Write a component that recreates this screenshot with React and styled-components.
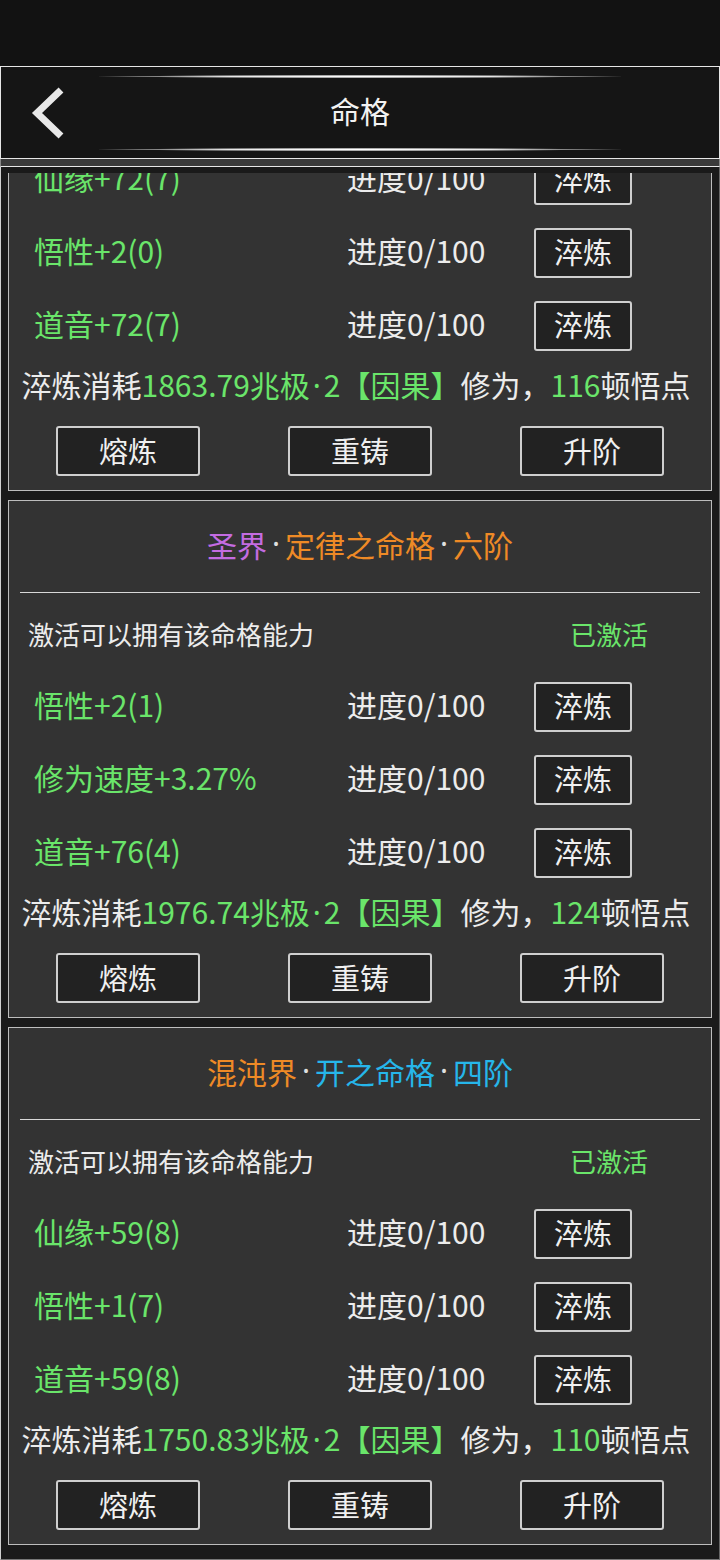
import React from 'react';
import styled, { createGlobalStyle } from 'styled-components';

const GREEN = '#6ae56a';
const ORANGE = '#ee8a26';
const BLUE = '#26b6ea';
const PURPLE = '#c46ce2';

const GlobalStyle = createGlobalStyle`
  html, body {
    margin: 0;
    padding: 0;
    background: #121212;
  }
  body {
    font-family: "Noto Sans CJK SC", "Noto Sans", sans-serif;
    color: #ececec;
  }
  #root {
    width: 720px;
  }
`;

const cards = [
  {
    title: [
      { text: '仙界', color: PURPLE },
      { text: '天道之命格', color: ORANGE },
      { text: '五阶', color: ORANGE },
    ],
    rows: ['仙缘+72(7)', '悟性+2(0)', '道音+72(7)'],
    cost: '1863.79',
    points: '116',
  },
  {
    title: [
      { text: '圣界', color: PURPLE },
      { text: '定律之命格', color: ORANGE },
      { text: '六阶', color: ORANGE },
    ],
    rows: ['悟性+2(1)', '修为速度+3.27%', '道音+76(4)'],
    cost: '1976.74',
    points: '124',
  },
  {
    title: [
      { text: '混沌界', color: ORANGE },
      { text: '开之命格', color: BLUE },
      { text: '四阶', color: BLUE },
    ],
    rows: ['仙缘+59(8)', '悟性+1(7)', '道音+59(8)'],
    cost: '1750.83',
    points: '110',
  },
];

const Page = styled.div`
  display: flex;
  flex-direction: column;
  height: 1560px;
  background: #121212;
  overflow: hidden;
`;

const StatusBar = styled.div`
  height: 66px;
  flex-shrink: 0;
`;

const Header = styled.header`
  box-sizing: border-box;
  height: 93px;
  flex-shrink: 0;
  display: flex;
  flex-direction: column;
  padding: 8px 0 7px;
  background: #151515;
  border: 1px solid #e6e6e6;
`;

const Glow = styled.div`
  height: 3px;
  margin: 0 98px;
  background: radial-gradient(ellipse at center, #ffffff 0%, #e8e8e8 35%, rgba(200, 200, 200, 0.5) 60%, transparent 72%);
`;

const TitleRow = styled.div`
  flex: 1;
  display: grid;
  grid-template-columns: 1fr auto 1fr;
  align-items: center;
`;

const BackButton = styled.div`
  display: flex;
  align-items: center;
  padding-left: 28px;
`;

const PageTitle = styled.h1`
  margin: 0 0 6px;
  font-size: 30px;
  font-weight: 400;
  color: #f2f2f2;
  line-height: 1;
`;

const Band = styled.div`
  height: 7px;
  flex-shrink: 0;
  background: #3a3a3a;
  border-bottom: 1px solid #e6e6e6;
  border-left: 1px solid #888;
  border-right: 1px solid #888;
`;

const Viewport = styled.main`
  flex: 1;
  min-height: 0;
  display: flex;
  flex-direction: column;
  padding: 6px 7px 13px;
  background: #1a1a1a;
  border-left: 1px solid #d0d0d0;
  border-right: 1px solid #666;
  border-bottom: 1px solid #777;
`;

const Clip = styled.div`
  flex: 1;
  min-height: 0;
  overflow: hidden;
`;

const List = styled.div`
  display: flex;
  flex-direction: column;
  gap: 9px;
  margin-top: -200px;
`;

const Card = styled.section`
  box-sizing: border-box;
  height: 518px;
  display: flex;
  flex-direction: column;
  background: #333333;
  border: 1px solid #bdbdbd;
`;

const CardTitle = styled.div`
  box-sizing: border-box;
  height: 91px;
  padding-bottom: 6px;
  display: flex;
  align-items: center;
  justify-content: center;
  font-size: 30px;
  line-height: 1;
`;

const Part = styled.span`
  color: ${({ $color }) => $color};
`;

const Dot = styled.span`
  font-family: "Noto Sans", sans-serif;
  color: #e0e0e0;
  margin: 0 5px;
`;

const InlineDot = styled.span`
  font-family: "Noto Sans", sans-serif;
  margin: 0 3px;
`;

const Divider = styled.div`
  height: 1px;
  margin: 0 11px;
  background: #d8d8d8;
`;

const ActiveRow = styled.div`
  box-sizing: border-box;
  height: 77px;
  padding: 4px 63px 0 19px;
  display: flex;
  align-items: center;
  justify-content: space-between;
  font-size: 26px;
`;

const ActiveState = styled.span`
  color: ${GREEN};
`;

const StatRow = styled.div`
  box-sizing: border-box;
  height: 73px;
  display: grid;
  grid-template-columns: 313px 187px 97px;
  align-items: center;
  padding-left: 25px;
  font-size: 30px;
`;

const StatText = styled.span`
  color: ${({ $green }) => ($green ? GREEN : '#ececec')};
  margin-bottom: 5px;
`;

const Button = styled.button`
  box-sizing: border-box;
  height: 50px;
  width: ${({ $wide }) => ($wide ? '144px' : '98px')};
  padding: 0 0 2px;
  display: flex;
  align-items: center;
  justify-content: center;
  background: #222222;
  color: #f0f0f0;
  border: 2px solid #cfcfcf;
  border-radius: 3px;
  font-family: inherit;
  font-size: 29px;
  line-height: 1;
`;

const CostLine = styled.div`
  box-sizing: border-box;
  height: 48px;
  padding: 0 8px 5px 0;
  display: flex;
  align-items: center;
  justify-content: center;
  font-size: 30px;
  white-space: nowrap;
`;

const Hi = styled.span`
  color: ${GREEN};
`;

const Actions = styled.div`
  display: grid;
  grid-template-columns: repeat(3, 1fr);
  justify-items: center;
  margin-top: 16px;
  padding: 0 3px;
`;

const BackIcon = () => (
  <svg width="40" height="52" viewBox="0 0 40 52">
    <polyline
      points="32,3 8,26 32,49"
      fill="none"
      stroke="#e8e8e8"
      strokeWidth="7"
      strokeLinejoin="miter"
    />
  </svg>
);

const FateCard = ({ card }) => (
  <Card>
    <CardTitle>
      {card.title.map((p, i) => (
        <React.Fragment key={p.text}>
          {i > 0 && <Dot>·</Dot>}
          <Part $color={p.color}>{p.text}</Part>
        </React.Fragment>
      ))}
    </CardTitle>
    <Divider />
    <ActiveRow>
      <span>激活可以拥有该命格能力</span>
      <ActiveState>已激活</ActiveState>
    </ActiveRow>
    {card.rows.map(r => (
      <StatRow key={r}>
        <StatText $green>{r}</StatText>
        <StatText>进度0/100</StatText>
        <Button>淬炼</Button>
      </StatRow>
    ))}
    <CostLine>
      淬炼消耗
      <Hi>
        {card.cost}兆极<InlineDot>·</InlineDot>2【因果】
      </Hi>
      修为，<Hi>{card.points}</Hi>顿悟点
    </CostLine>
    <Actions>
      <Button $wide>熔炼</Button>
      <Button $wide>重铸</Button>
      <Button $wide>升阶</Button>
    </Actions>
  </Card>
);

export default function App() {
  return (
    <>
      <GlobalStyle />
      <Page>
        <StatusBar />
        <Header>
          <Glow />
          <TitleRow>
            <BackButton>
              <BackIcon />
            </BackButton>
            <PageTitle>命格</PageTitle>
            <div />
          </TitleRow>
          <Glow />
        </Header>
        <Band />
        <Viewport>
          <Clip>
            <List>
              {cards.map(c => (
                <FateCard key={c.cost} card={c} />
              ))}
            </List>
          </Clip>
        </Viewport>
      </Page>
    </>
  );
}
